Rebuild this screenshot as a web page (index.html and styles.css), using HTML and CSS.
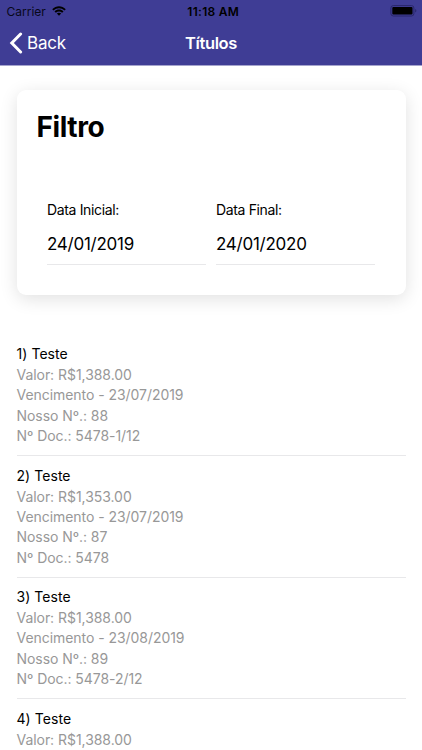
FILE: index.html
```html
<!DOCTYPE html>
<html lang="pt-BR">

<head>
    <meta charset="UTF-8">
    <meta name="viewport" content="width=device-width, initial-scale=1.0">
    <title>Títulos</title>
    <link rel="stylesheet" href="styles.css">
</head>

<body>
    <header class="header">
        <div class="status-bar">
            <div class="carrier">
                <span>Carrier</span>
                <svg class="wifi" viewBox="0 0 14 10" width="14" height="10">
                    <path d="M0.2 3.2C4.2-.7 9.8-.7 13.8 3.2L12.4 4.6C9.2 1.5 4.8 1.5 1.6 4.6Z" />
                    <path d="M2.5 5.4C5.1 2.9 8.9 2.9 11.5 5.4L10.1 6.8C8.3 5.1 5.7 5.1 3.9 6.8Z" />
                    <path d="M4.8 7.6C6.1 6.5 7.9 6.5 9.2 7.6L7 9.8Z" />
                </svg>
            </div>
            <div class="clock">11:18 AM</div>
            <div class="battery">
                <svg viewBox="0 0 27 12" width="27" height="12">
                    <rect x="0.9" y="0.6" width="23" height="10.4" rx="2.4" fill="none" stroke="#29276b" />
                    <rect x="2.3" y="2" width="20.2" height="7.6" rx="1" />
                    <path d="M25.2 4C26.8 4.6 26.8 7 25.2 7.6Z" fill="#29276b" />
                </svg>
            </div>
        </div>
        <nav class="nav-bar">
            <a href="#" class="back">
                <svg viewBox="0 0 14 22" width="14" height="22">
                    <path d="M11.6 2L2.8 11L11.6 20" />
                </svg>
                <span>Back</span>
            </a>
            <h1>Títulos</h1>
        </nav>
    </header>

    <main>
        <section class="card">
            <h2>Filtro</h2>
            <div class="datas">
                <div class="campo">
                    <label>Data Inicial:</label>
                    <div class="valor">24/01/2019</div>
                </div>
                <div class="campo">
                    <label>Data Final:</label>
                    <div class="valor">24/01/2020</div>
                </div>
            </div>
        </section>

        <ul class="lista">
            <li>
                <h3>1) Teste</h3>
                <p>Valor: R$1,388.00</p>
                <p>Vencimento - 23/07/2019</p>
                <p>Nosso Nº.: 88</p>
                <p>Nº Doc.: 5478-1/12</p>
            </li>
            <li>
                <h3>2) Teste</h3>
                <p>Valor: R$1,353.00</p>
                <p>Vencimento - 23/07/2019</p>
                <p>Nosso Nº.: 87</p>
                <p>Nº Doc.: 5478</p>
            </li>
            <li>
                <h3>3) Teste</h3>
                <p>Valor: R$1,388.00</p>
                <p>Vencimento - 23/08/2019</p>
                <p>Nosso Nº.: 89</p>
                <p>Nº Doc.: 5478-2/12</p>
            </li>
            <li>
                <h3>4) Teste</h3>
                <p>Valor: R$1,388.00</p>
            </li>
        </ul>
    </main>
</body>

</html>
```
FILE: styles.css
```css
* {
    box-sizing: border-box;
}

body {
    margin: 0;
    height: 750px;
    overflow: hidden;
    background-color: #fff;
    color: #000;
    font-family: Inter, "Liberation Sans", sans-serif;
}

h1, h2, h3, p, ul {
    margin: 0;
    padding: 0;
}

.header {
    height: 66px;
    background-color: #3f3d95;
    border-bottom: 1px solid #a5a4cd;
}

.status-bar {
    display: grid;
    grid-template-columns: 1fr auto 1fr;
    align-items: center;
    height: 22px;
    padding: 0 5px 0 6.5px;
    font-size: 12px;
}

.carrier {
    display: flex;
    align-items: center;
    gap: 6px;
    color: #08081a;
}

.clock {
    padding-left: 3px;
    font-weight: 600;
    letter-spacing: 0.3px;
}

.battery {
    display: flex;
    justify-content: flex-end;
}

.nav-bar {
    display: grid;
    grid-template-columns: 1fr auto 1fr;
    align-items: center;
    height: 42px;
    padding: 0 9px;
    color: #fff;
}

.back {
    display: flex;
    align-items: center;
    gap: 4px;
    color: #fff;
    font-size: 17px;
    letter-spacing: -0.2px;
    text-decoration: none;
}

.back path {
    fill: none;
    stroke: #fff;
    stroke-width: 3;
    stroke-linecap: round;
}

.nav-bar h1 {
    font-size: 16.5px;
    font-weight: 600;
    letter-spacing: -0.4px;
}

.card {
    height: 205px;
    margin: 24px 16.5px 0;
    padding: 20px;
    border-radius: 9px;
    background-color: #fff;
    box-shadow: 0 4px 18px rgba(0, 0, 0, 0.12);
}

.card h2 {
    font-size: 28px;
    font-weight: 700;
    line-height: 34px;
    letter-spacing: -0.4px;
}

.datas {
    display: grid;
    grid-template-columns: 1fr 1fr;
    gap: 10px;
    margin: 56px 10.5px 0;
}

.campo label {
    display: block;
    font-size: 14px;
    line-height: 20px;
    letter-spacing: -0.35px;
}

.valor {
    height: 45px;
    border-bottom: 1px solid #e8e8ea;
    font-size: 17px;
    line-height: 48px;
    letter-spacing: -0.25px;
}

.lista {
    margin: 39.5px 16.5px 0;
    list-style: none;
}

.lista li {
    height: 121.5px;
    padding-top: 8.5px;
    border-bottom: 1px solid #e8e8ea;
}

.lista li:last-child {
    height: auto;
    padding-bottom: 0;
    border-bottom: none;
}

.lista h3 {
    margin-bottom: 1px;
    font-size: 14px;
    font-weight: 400;
    line-height: 21px;
    letter-spacing: 0.05px;
}

.lista p {
    color: #989898;
    font-size: 14px;
    line-height: 20.4px;
    letter-spacing: -0.05px;
}
```
